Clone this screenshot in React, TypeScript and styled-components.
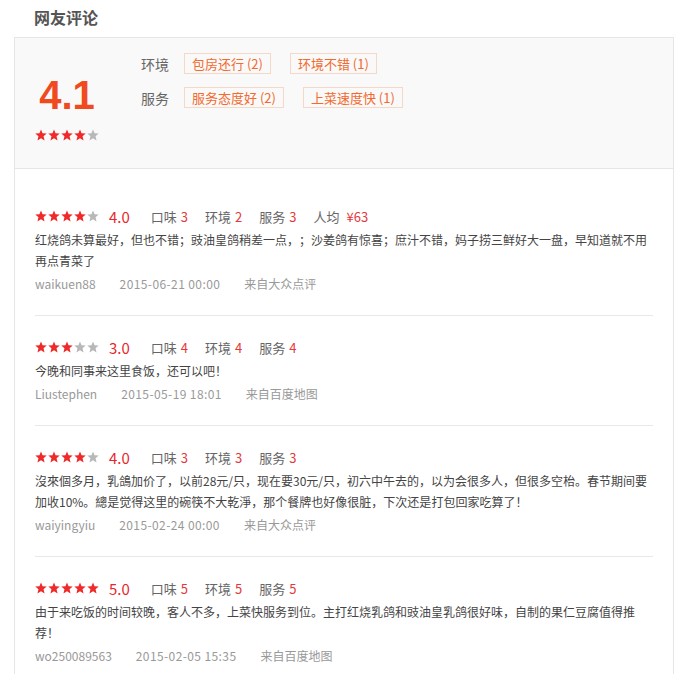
import React from "react";
import styled, { createGlobalStyle } from "styled-components";

const GlobalStyle = createGlobalStyle`
  html, body { margin: 0; padding: 0; background: #fff; }
  body {
    font-family: "Microsoft YaHei", "Noto Sans CJK SC", sans-serif;
    color: #333;
    text-spacing-trim: space-all;
  }
`;

const Page = styled.div`
  padding-left: 14px;
  width: 660px;
`;

const Title = styled.h2`
  margin: 0;
  height: 37px;
  line-height: 35px;
  padding-left: 20px;
  font-size: 16px;
  font-weight: bold;
  color: #555;
`;

const Panel = styled.div`
  box-sizing: border-box;
  width: 660px;
  border: 1px solid #e6e6e6;
  border-bottom: none;
`;

const Summary = styled.div`
  display: flex;
  box-sizing: border-box;
  height: 131px;
  padding-left: 20px;
  background: #f9f9f9;
  border-bottom: 1px solid #e6e6e6;
`;

const ScoreCol = styled.div`
  width: 64px;
  display: flex;
  flex-direction: column;
  align-items: center;
  padding-top: 37px;
`;

const BigScore = styled.div`
  font-family: "Liberation Sans", Arial, sans-serif;
  font-size: 40px;
  line-height: 40px;
  font-weight: bold;
  color: #f04a1f;
  margin-bottom: 14px;
`;

const TagArea = styled.div`
  margin-left: 42px;
  padding-top: 15px;
  display: flex;
  flex-direction: column;
  gap: 13px;
`;

const TagRow = styled.div`
  display: flex;
  align-items: center;
  height: 21px;
`;

const TagLabel = styled.span`
  font-size: 14px;
  color: #666;
  margin-right: 15px;
`;

const Tag = styled.span`
  box-sizing: border-box;
  height: 21px;
  line-height: 19px;
  padding: 0 7px;
  border: 1px solid #f6d8c6;
  font-size: 13px;
  color: #f26a2e;
  margin-right: 19px;
  white-space: nowrap;
`;

const List = styled.div`
  padding: 16px 20px 0;
`;

const Review = styled.div`
  padding: 18px 0 20px;
  border-bottom: 1px solid #e8e8e8;
`;

const RatingRow = styled.div`
  display: flex;
  align-items: center;
  height: 26px;
`;

const StarsWrap = styled.span`
  display: inline-flex;
  gap: 1px;
`;

const RatingNum = styled.span`
  margin-left: 10px;
  margin-right: 21px;
  font-size: 15px;
  color: #e8262c;
`;

const Item = styled.span`
  font-size: 13px;
  color: #666;
  margin-right: 17px;
`;

const ItemValue = styled.span<{ $wide?: boolean }>`
  color: #e4393c;
  margin-left: ${(p) => (p.$wide ? "7px" : "4px")};
`;

const Body = styled.p`
  margin: 0;
  font-size: 12px;
  line-height: 21px;
  color: #444;
`;

const Meta = styled.div`
  padding-top: 2px;
  font-size: 12px;
  line-height: 22px;
  color: #999;
  display: flex;
  gap: 24px;
`;

const DateText = styled.span`
  letter-spacing: 0.4px;
`;

const Star = ({ on }: { on: boolean }) => (
  <svg width="12" height="12" viewBox="0 0 12 12">
    <polygon
      points="6,0.4 7.55,4.2 11.7,4.5 8.55,7.15 9.55,11.4 6,9.2 2.45,11.4 3.45,7.15 0.3,4.5 4.45,4.2"
      fill={on ? "#ee2a2a" : "#b8b8b8"}
    />
  </svg>
);

const Stars = ({ n }: { n: number }) => (
  <StarsWrap>
    {[0, 1, 2, 3, 4].map((i) => (
      <Star key={i} on={i < n} />
    ))}
  </StarsWrap>
);

type R = {
  stars: number;
  score: string;
  items: [string, string][];
  text: string;
  user: string;
  date: string;
  src: string;
};

const reviews: R[] = [
  {
    stars: 4,
    score: "4.0",
    items: [
      ["口味", "3"],
      ["环境", "2"],
      ["服务", "3"],
      ["人均", "¥63"],
    ],
    text: "红烧鸽未算最好，但也不错；豉油皇鸽稍差一点，；沙姜鸽有惊喜；庶汁不错，妈子捞三鲜好大一盘，早知道就不用再点青菜了",
    user: "waikuen88",
    date: "2015-06-21 00:00",
    src: "来自大众点评",
  },
  {
    stars: 3,
    score: "3.0",
    items: [
      ["口味", "4"],
      ["环境", "4"],
      ["服务", "4"],
    ],
    text: "今晚和同事来这里食饭，还可以吧！",
    user: "Liustephen",
    date: "2015-05-19 18:01",
    src: "来自百度地图",
  },
  {
    stars: 4,
    score: "4.0",
    items: [
      ["口味", "3"],
      ["环境", "3"],
      ["服务", "3"],
    ],
    text: "沒來個多月，乳鴿加价了，以前28元/只，现在要30元/只，初六中午去的，以为会很多人，但很多空枱。春节期间要加收10%。總是觉得这里的碗筷不大乾淨，那个餐牌也好像很脏，下次还是打包回家吃算了！",
    user: "waiyingyiu",
    date: "2015-02-24 00:00",
    src: "来自大众点评",
  },
  {
    stars: 5,
    score: "5.0",
    items: [
      ["口味", "5"],
      ["环境", "5"],
      ["服务", "5"],
    ],
    text: "由于来吃饭的时间较晚，客人不多，上菜快服务到位。主打红烧乳鸽和豉油皇乳鸽很好味，自制的果仁豆腐值得推荐！",
    user: "wo250089563",
    date: "2015-02-05 15:35",
    src: "来自百度地图",
  },
];

export default function App() {
  return (
    <>
      <GlobalStyle />
      <Page>
        <Title>网友评论</Title>
        <Panel>
          <Summary>
            <ScoreCol>
              <BigScore>4.1</BigScore>
              <Stars n={4} />
            </ScoreCol>
            <TagArea>
              <TagRow>
                <TagLabel>环境</TagLabel>
                <Tag>包房还行 (2)</Tag>
                <Tag>环境不错 (1)</Tag>
              </TagRow>
              <TagRow>
                <TagLabel>服务</TagLabel>
                <Tag>服务态度好 (2)</Tag>
                <Tag>上菜速度快 (1)</Tag>
              </TagRow>
            </TagArea>
          </Summary>
          <List>
            {reviews.map((r, idx) => (
              <Review key={idx}>
                <RatingRow>
                  <Stars n={r.stars} />
                  <RatingNum>{r.score}</RatingNum>
                  {r.items.map(([k, v]) => (
                    <Item key={k}>
                      {k}
                      <ItemValue $wide={k === "人均"}>{v}</ItemValue>
                    </Item>
                  ))}
                </RatingRow>
                <Body>{r.text}</Body>
                <Meta>
                  <span>{r.user}</span>
                  <DateText>{r.date}</DateText>
                  <span>{r.src}</span>
                </Meta>
              </Review>
            ))}
          </List>
        </Panel>
      </Page>
    </>
  );
}
